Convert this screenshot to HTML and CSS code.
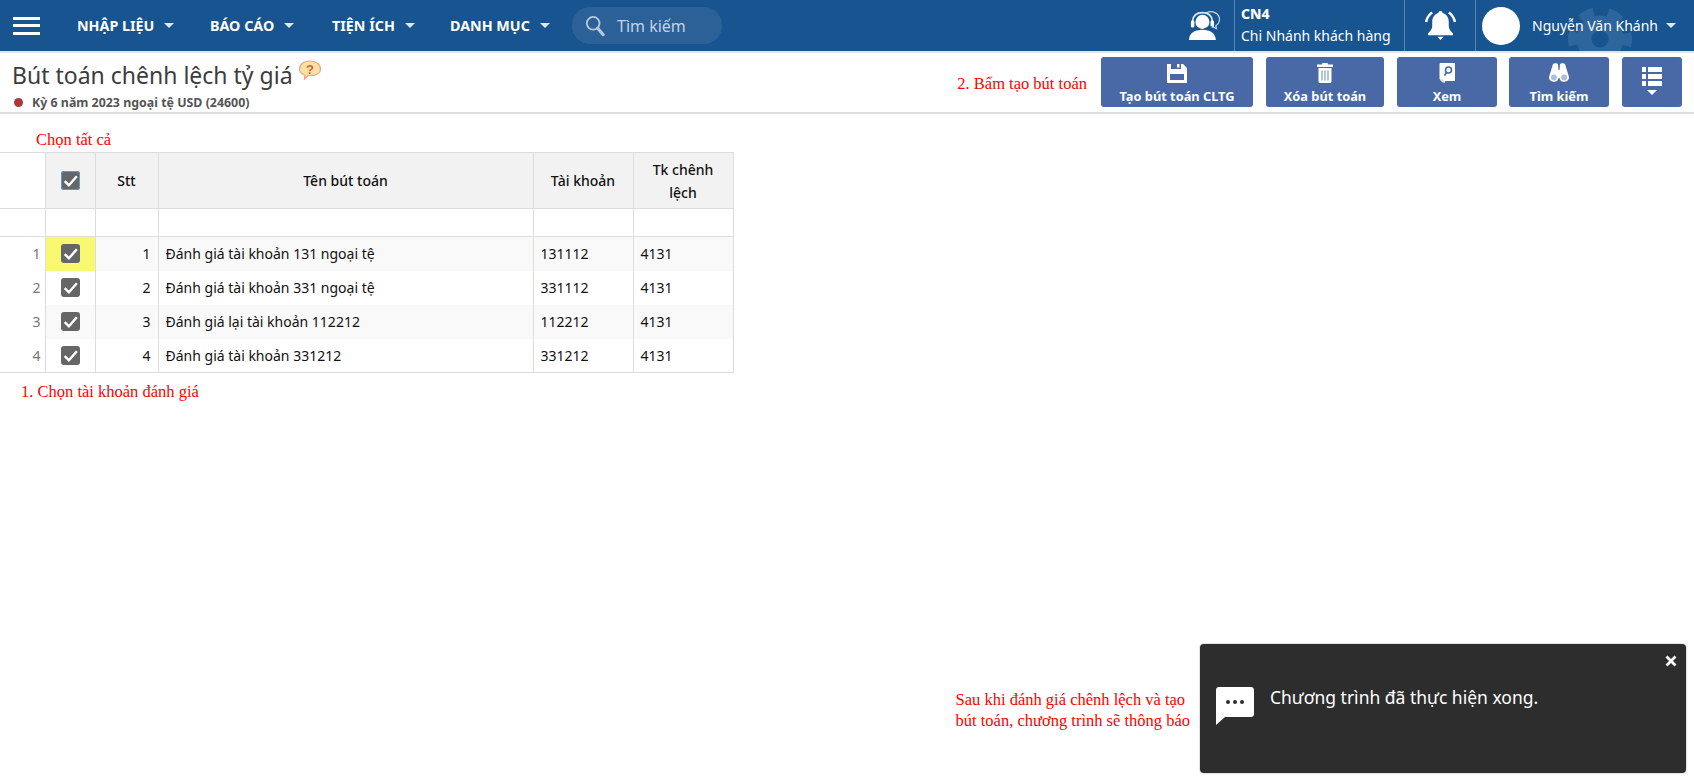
FILE: index.html
```html
<!DOCTYPE html>
<html lang="vi">
<head>
<meta charset="utf-8">
<title>Bút toán chênh lệch tỷ giá</title>
<link rel="stylesheet" href="styles.css">
</head>
<body>
<header class="topbar">
  <button class="burger" aria-label="Menu"><span></span><span></span><span></span></button>
  <nav class="nav">
    <a class="nav-item">NHẬP LIỆU<i class="caret"></i></a>
    <a class="nav-item">BÁO CÁO<i class="caret"></i></a>
    <a class="nav-item">TIỆN ÍCH<i class="caret"></i></a>
    <a class="nav-item">DANH MỤC<i class="caret"></i></a>
  </nav>
  <div class="search">
    <svg class="search-icon" viewBox="0 0 22 24"><circle cx="9" cy="9" r="7" fill="none" stroke="#b9c9dc" stroke-width="2"/><path d="M14 14.500l6 7" stroke="#b9c9dc" stroke-width="3.400" stroke-linecap="round"/></svg>
    <span>Tìm kiếm</span>
  </div>
  <div class="top-right">
    <svg class="gear" viewBox="0 0 60 60"><circle cx="30" cy="30" r="15" fill="none" stroke="#2e659c" stroke-width="14"/><circle cx="30" cy="30" r="25" fill="none" stroke="#2e659c" stroke-width="10" stroke-dasharray="13 13.180" stroke-dashoffset="6.500"/></svg>
    <svg class="agent" viewBox="0 0 31 28"><path d="M1 28c0-6.500 5-10 13-10s12.500 3.500 13 10c-3 0-8 0-13 0s-10 0-13 0z" fill="#fff"/><circle cx="14" cy="10.500" r="6.800" fill="#fff"/><path d="M4.500 13V9.500C5 4 9 1.500 14 1.500S23 4 23.500 9.500V13" fill="none" stroke="#dce6f0" stroke-width="1.600"/><rect x="2.800" y="9" width="3.400" height="7" rx="1.500" fill="#fff"/><rect x="21.800" y="9" width="3.400" height="7" rx="1.500" fill="#fff"/><path d="M18 1.500c6-2.500 12.500 1 12.500 6.500 0 3-1.500 5-3.500 6l.5 3-4-2" fill="none" stroke="#c6d5e5" stroke-width="1.200"/><path d="M23 15c-2 1.500-4 2-7 2" fill="none" stroke="#18548f" stroke-width="1"/></svg>
    <div class="branch">
      <strong>CN4</strong>
      <span>Chi Nhánh khách hàng</span>
    </div>
    <div class="bell-box">
      <svg class="bell" viewBox="0 0 30 28"><path d="M15 0c1.200 0 2 .8 2 2 4 1 6 4.500 6 8.500v4c0 3 2 5 4 7v2H3v-2c2-2 4-4 4-7v-4c0-4 2-7.500 6-8.500 0-1.200.8-2 2-2z" fill="#fff"/><path d="M12 25h6l-3 3z" fill="#fff"/><path d="M7 1.500C4 3.500 2 6.500 1 10.500M23 1.500c3 2 5 5 6 9" fill="none" stroke="#fff" stroke-width="2.400"/></svg>
    </div>
    <div class="user">
      <span class="avatar"></span>
      <span class="user-name">Nguyễn Văn Khánh</span>
      <i class="caret"></i>
    </div>
  </div>
</header>

<section class="subbar">
  <div class="heading">
    <div class="title-row">
      <h1>Bút toán chênh lệch tỷ giá</h1>
      <svg class="help" viewBox="0 0 24 20"><path d="M12 1c6 0 10.500 3.300 10.500 8S18 15.500 12 15.500l-2 .2-3.500 3.300.5-3.800C4 14 1.500 12 1.500 9 1.500 4.300 6 1 12 1z" fill="#fde2a4" stroke="#e3a98a" stroke-width="1.200"/><text x="12" y="13.500" class="help-q">?</text></svg>
    </div>
    <div class="period"><i class="dot"></i>Kỳ 6 năm 2023 ngoại tệ USD (24600)</div>
  </div>
  <div class="toolbar">
    <span class="note note-toolbar">2. Bấm tạo bút toán</span>
    <button class="tool w152">
      <svg class="ticon" viewBox="0 0 20 20"><path fill-rule="evenodd" d="M0 1h4v5h10V1h2l4 4v15H0zM3 11v6h14v-6zM10 1h2.500v3.500H10z" fill="#fff"/></svg>
      <span>Tạo bút toán CLTG</span>
    </button>
    <button class="tool w118">
      <svg class="ticon" viewBox="0 0 20 20"><path d="M7.500 0h5l.6 1.500H18V4H2V1.500h4.900zM3.500 5h13v13.500c0 .8-.6 1.500-1.400 1.500H4.900c-.8 0-1.400-.7-1.400-1.500z" fill="#fff"/><path d="M7 7.500v10M10 7.500v10M13 7.500v10" stroke="#8fa5cb" stroke-width="1.300"/></svg>
      <span>Xóa bút toán</span>
    </button>
    <button class="tool w100">
      <svg class="ticon" viewBox="0 0 20 20"><path d="M3 0h15v18H6c-2 0-3.500-1-3.500-3V1z" fill="#fff"/><path d="M2.500 15c1 3 2.500 4.500 5 5l1-2" fill="#dfe5f0"/><circle cx="11.500" cy="7" r="3" fill="none" stroke="#4869a6" stroke-width="1.600"/><path d="M9.500 9.500l-2 3" stroke="#4869a6" stroke-width="1.800"/></svg>
      <span>Xem</span>
    </button>
    <button class="tool w100 tight">
      <svg class="ticon" viewBox="0 0 20 20"><path d="M4 1c1-1 4-1 5 0l.5 6h1L11 1c1-1 4-1 5 0l4 13a4.800 4.800 0 0 1-9.500 1h-1A4.800 4.800 0 0 1 0 14z" fill="#fff"/><circle cx="4.900" cy="14.500" r="3" fill="#aebfdc"/><circle cx="15.100" cy="14.500" r="3" fill="#aebfdc"/></svg>
      <span>Tìm kiếm</span>
    </button>
    <button class="tool w60">
      <svg class="ticon-list" viewBox="0 0 20 28"><path d="M0 0h4v5H0zM6 0h14v5H6zM0 7h4v5H0zM6 7h14v5H6zM0 14h4v5H0zM6 14h14v5H6zM5 23h10l-5 5z" fill="#fff"/></svg>
    </button>
  </div>
</section>

<main class="content">
  <p class="note note-all">Chọn tất cả</p>
  <table class="grid">
    <colgroup>
      <col class="c-row"><col class="c-check"><col class="c-stt"><col class="c-name"><col class="c-acc"><col class="c-diff">
    </colgroup>
    <thead>
      <tr class="head">
        <th class="gutter"></th>
        <th><span class="cb cb-focus"><svg viewBox="0 0 18 18"><path d="M3.500 9.500l4 4L15 5" fill="none" stroke="#fff" stroke-width="2.300"/></svg></span></th>
        <th>Stt</th>
        <th>Tên bút toán</th>
        <th>Tài khoản</th>
        <th>Tk chênh lệch</th>
      </tr>
      <tr class="filter">
        <td class="gutter"></td><td></td><td></td><td></td><td></td><td></td>
      </tr>
    </thead>
    <tbody>
      <tr class="odd">
        <td class="gutter rownum">1</td>
        <td class="check active"><span class="cb"><svg viewBox="0 0 18 18"><path d="M3.500 9.500l4 4L15 5" fill="none" stroke="#fff" stroke-width="2.300"/></svg></span></td>
        <td class="num">1</td><td>Đánh giá tài khoản 131 ngoại tệ</td><td>131112</td><td>4131</td>
      </tr>
      <tr>
        <td class="gutter rownum">2</td>
        <td class="check"><span class="cb"><svg viewBox="0 0 18 18"><path d="M3.500 9.500l4 4L15 5" fill="none" stroke="#fff" stroke-width="2.300"/></svg></span></td>
        <td class="num">2</td><td>Đánh giá tài khoản 331 ngoại tệ</td><td>331112</td><td>4131</td>
      </tr>
      <tr class="odd">
        <td class="gutter rownum">3</td>
        <td class="check"><span class="cb"><svg viewBox="0 0 18 18"><path d="M3.500 9.500l4 4L15 5" fill="none" stroke="#fff" stroke-width="2.300"/></svg></span></td>
        <td class="num">3</td><td>Đánh giá lại tài khoản 112212</td><td>112212</td><td>4131</td>
      </tr>
      <tr>
        <td class="gutter rownum">4</td>
        <td class="check"><span class="cb"><svg viewBox="0 0 18 18"><path d="M3.500 9.500l4 4L15 5" fill="none" stroke="#fff" stroke-width="2.300"/></svg></span></td>
        <td class="num">4</td><td>Đánh giá tài khoản 331212</td><td>331212</td><td>4131</td>
      </tr>
    </tbody>
  </table>
  <p class="note note-pick">1. Chọn tài khoản đánh giá</p>
</main>

<aside class="notify">
  <p class="note note-toast">Sau khi đánh giá chênh lệch và tạo<br>bút toán, chương trình sẽ thông báo</p>
  <div class="toast">
    <svg class="toast-close" viewBox="0 0 12 12"><path d="M1.500 1.500l9 9M10.500 1.500l-9 9" stroke="#fff" stroke-width="2.800"/></svg>
    <svg class="toast-icon" viewBox="0 0 38 38"><path d="M3 0h32c1.700 0 3 1.300 3 3v24c0 1.700-1.300 3-3 3H9l-9 8V3c0-1.700 1.300-3 3-3z" fill="#fff"/><circle cx="12" cy="15" r="2" fill="#2d2d2d"/><circle cx="19" cy="15" r="2" fill="#2d2d2d"/><circle cx="26" cy="15" r="2" fill="#2d2d2d"/></svg>
    <span class="toast-text">Chương trình đã thực hiện xong.</span>
  </div>
</aside>
</body>
</html>
```

FILE: styles.css
```css
* { box-sizing: border-box; }
html, body { margin: 0; padding: 0; }
body {
  width: 1694px;
  height: 784px;
  overflow: hidden;
  position: relative;
  background: #fff;
  font-family: "Noto Sans", "Open Sans", sans-serif;
  color: #111;
}

/* top bar */
.topbar {
  height: 51px;
  background: #18548f;
  display: flex;
  align-items: center;
  color: #fff;
  overflow: hidden;
}
.burger {
  width: 27px;
  height: 18px;
  margin-left: 13px;
  padding: 0;
  border: 0;
  background: none;
  display: flex;
  flex-direction: column;
  justify-content: space-between;
}
.burger span { display: block; height: 3px; background: #fff; }
.nav { display: flex; margin-left: 37px; }
.nav-item {
  display: flex;
  align-items: center;
  font-size: 14.300px;
  font-weight: 700;
  width: 122px;
  white-space: nowrap;
}
.nav-item:nth-child(1) { width: 133px; }
.nav-item:nth-child(3) { width: 118px; }
.caret {
  width: 0;
  height: 0;
  border-left: 5px solid transparent;
  border-right: 5px solid transparent;
  border-top: 5px solid #dfe8f2;
  margin-left: 10px;
}
.search {
  width: 150px;
  height: 37px;
  border-radius: 18px;
  background: #2b6197;
  display: flex;
  align-items: center;
  padding-left: 13px;
  gap: 12px;
  font-size: 16px;
  color: #c4d2e2;
}
.search-icon { width: 20px; height: 22px; }
.top-right {
  margin-left: auto;
  height: 51px;
  display: flex;
  align-items: center;
  position: relative;
}
.gear { position: absolute; right: 62px; top: 7px; width: 64px; height: 64px; }
.agent { width: 32px; height: 29px; margin-right: 14px; position: relative; }
.branch {
  height: 51px;
  width: 171px;
  padding-left: 6px;
  border-left: 1px solid #5a86b3;
  border-right: 1px solid #5a86b3;
  display: flex;
  flex-direction: column;
  justify-content: center;
  font-size: 14px;
  line-height: 23px;
  position: relative;
}
.branch strong { font-size: 14px; line-height: 20px; font-weight: 800; }
.bell-box {
  width: 71px;
  height: 51px;
  border-right: 1px solid #5a86b3;
  display: flex;
  align-items: center;
  justify-content: center;
  position: relative;
}
.bell { width: 31px; height: 29px; }
.user {
  display: flex;
  align-items: center;
  width: 218px;
  padding-left: 6px;
  font-size: 14px;
  position: relative;
}
.avatar { width: 38px; height: 38px; border-radius: 50%; background: #fff; }
.user-name { margin-left: 12px; white-space: nowrap; }
.user .caret { margin-left: 8px; }

/* title + toolbar */
.subbar {
  height: 63px;
  border-top: 2px solid #e3e3e3;
  border-bottom: 2px solid #dedede;
  display: flex;
  justify-content: space-between;
  padding: 0 12px;
}
.heading { padding-top: 7px; }
.title-row { display: flex; align-items: flex-start; }
h1 {
  margin: 0;
  font-size: 23px;
  font-weight: 400;
  line-height: 31px;
  color: #3c3c3c;
  white-space: nowrap;
}
.help { width: 24px; height: 20px; margin-left: 5px; }
.help-q { font: 700 13px "Liberation Sans", sans-serif; fill: #d2603a; text-anchor: middle; }
.period {
  display: flex;
  align-items: center;
  font-size: 12.400px;
  font-weight: 700;
  color: #555;
  margin-top: 3px;
  padding-left: 2px;
  white-space: nowrap;
}
.dot {
  width: 9px;
  height: 9px;
  border-radius: 50%;
  background: #a83a3f;
  margin-right: 9px;
}
.toolbar { display: flex; align-items: flex-start; padding-top: 4px; }
.tool {
  height: 50px;
  padding: 6px 0 0;
  border: 0;
  border-radius: 3px;
  background: #4869a6;
  color: #fff;
  font-family: inherit;
  font-size: 12.800px;
  font-weight: 700;
  display: flex;
  flex-direction: column;
  align-items: center;
  white-space: nowrap;
  margin-left: 13px;
}
.tool span { line-height: 20px; margin-top: 3px; }
.w152 { width: 152px; margin-left: 14px; }
.w118 { width: 118px; }
.w100 { width: 100px; }
.tight { margin-left: 12px; }
.w60 { width: 60px; padding-top: 10px; }
.ticon { width: 20px; height: 20px; }
.ticon-list { width: 20px; height: 28px; }

/* notes */
.note {
  margin: 0;
  font-family: "Liberation Serif", "Times New Roman", serif;
  font-size: 16.500px;
  color: #f00;
}
.note-toolbar { margin: 17px 0 0; }
.note-all { height: 38px; padding: 16px 0 0 36px; line-height: 20px; }
.note-pick { padding: 9px 0 0 21px; line-height: 20px; }

/* table */
.grid {
  border-collapse: collapse;
  table-layout: fixed;
  width: 733px;
  font-size: 14px;
}
.c-row { width: 45px; }
.c-check { width: 50px; }
.c-stt { width: 63px; }
.c-name { width: 375px; }
.c-acc { width: 100px; }
.c-diff { width: 100px; }
.grid th, .grid td { border: 1px solid #ddd; padding: 0 7px; }
.grid th {
  height: 56px;
  background: #f2f2f2;
  font-weight: 500;
  line-height: 23px;
  text-align: center;
  padding: 0 12px;
}
.grid th.gutter { background: #fff; border-left: 0; }
.filter td { height: 28px; background: #fff; }
.grid td.gutter { border-left: 0; }
.grid tbody td { height: 34px; border-top: 0; border-bottom: 0; }
.grid tbody tr:last-child td { border-bottom: 1px solid #ddd; }
.odd td { background: #f9f9f9; }
.grid tbody td.gutter { background: #fff; text-align: right; color: #777; padding-right: 4px; }
.check { text-align: center; }
.grid tbody td.check { padding: 0; }
.grid td.active { background: #f9f871; }
.num { text-align: right; }
.cb {
  display: block;
  width: 19px;
  height: 19px;
  margin: 0 auto;
  border-radius: 3px;
  background: #666;
}
.cb svg { display: block; width: 19px; height: 19px; }
.cb-focus { box-shadow: inset 0 0 0 1px #5a9bd5; }

/* notification */
.notify {
  position: absolute;
  right: 8px;
  bottom: 11px;
  display: flex;
  align-items: flex-start;
}
.note-toast { line-height: 21px; margin-top: 45px; margin-right: 10px; white-space: nowrap; }
.toast {
  position: relative;
  width: 486px;
  height: 129px;
  background: #2d2d2d;
  border-radius: 4px;
  box-shadow: 0 0 2px #999;
  color: #fff;
  padding: 43px 0 0 16px;
  display: flex;
  align-items: flex-start;
}
.toast-icon { width: 38px; height: 38px; flex: none; }
.toast-text { margin-left: 16px; font-size: 17.500px; line-height: 24px; margin-top: -2px; white-space: nowrap; }
.toast-close { position: absolute; right: 9px; top: 11px; width: 12px; height: 12px; }
```
